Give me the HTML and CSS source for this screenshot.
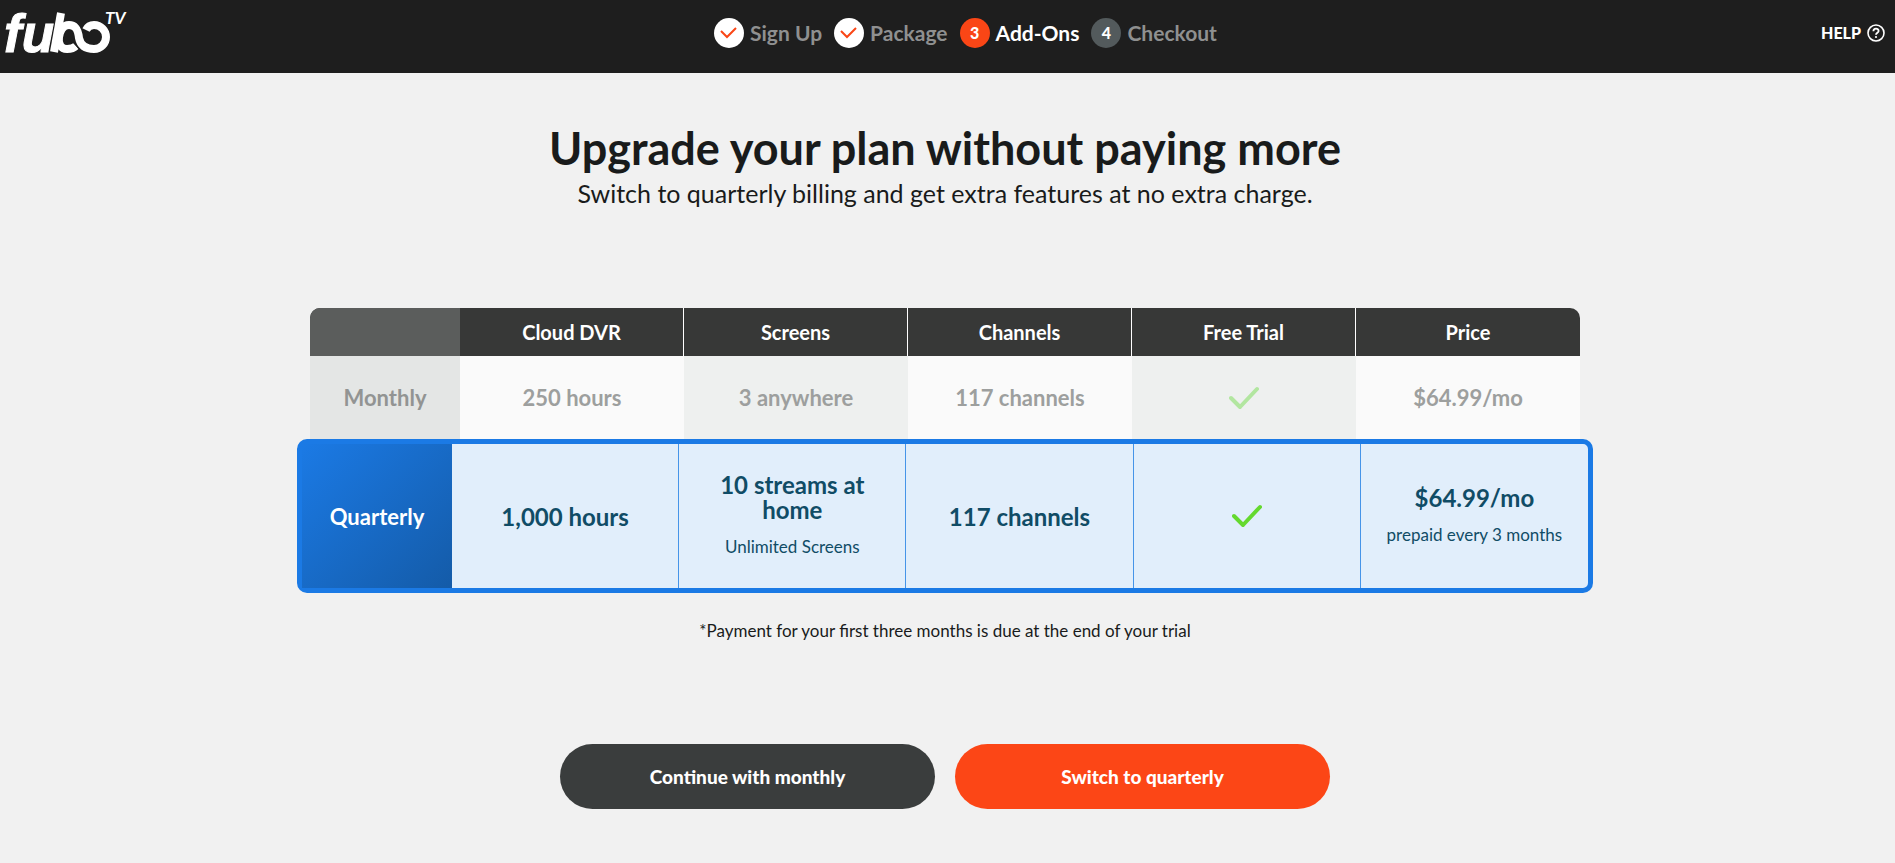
FILE: index.html
```html
<!DOCTYPE html>
<html lang="en">
<head>
<meta charset="utf-8">
<meta name="viewport" content="width=device-width, initial-scale=1">
<title>fuboTV - Add-Ons</title>
<link rel="stylesheet" href="styles.css">
</head>
<body>
<header class="topbar">
  <a class="logo" href="#" aria-label="fuboTV home">
    <svg width="130" height="70" viewBox="0 0 130 70" aria-hidden="true">
      <text class="logo-word" x="0" y="52">fu</text>
      <g fill="none" stroke="#fff" stroke-width="8">
        <path d="M57 13L50 52"/>
        <path d="M82 30C84 26 87 25 90 25A12 12 0 0 1 90 49C79 49 76 43 75 38C74 29 71 25 65 25C59 25 56 31 55 37C54 44 57 49 63 49C67 49 70 48 72 46"/>
      </g>
      <path d="M71 44Q74 48 77 52" fill="none" stroke="#1e1e1e" stroke-width="1"/>
      <text class="logo-tv" x="101" y="24">TV</text>
    </svg>
  </a>
  <ol class="steps">
    <li class="step">
      <span class="badge badge-done"><svg width="30" height="30" viewBox="0 0 30 30" aria-hidden="true"><path d="M7 13L13 19L22 10"/></svg></span>
      <span>Sign Up</span>
    </li>
    <li class="step">
      <span class="badge badge-done"><svg width="30" height="30" viewBox="0 0 30 30" aria-hidden="true"><path d="M7 13L13 19L22 10"/></svg></span>
      <span>Package</span>
    </li>
    <li class="step step-current" aria-current="step">
      <span class="badge badge-current">3</span>
      <span>Add-Ons</span>
    </li>
    <li class="step">
      <span class="badge">4</span>
      <span>Checkout</span>
    </li>
  </ol>
  <a class="help" href="#">HELP
    <svg width="18" height="18" viewBox="0 0 18 18" fill="none" stroke="#fff" aria-hidden="true">
      <circle cx="9" cy="9" r="8" stroke-width="1.6"/>
      <path d="M6.4 7.2C6.4 3.8 11.6 3.8 11.6 7C11.6 8.8 9 8.7 9 10.8" stroke-width="1.8"/>
      <circle cx="9" cy="13" r="1.1" fill="#fff" stroke="none"/>
    </svg>
  </a>
</header>

<main class="content">
  <h1 class="title">Upgrade your plan without paying more</h1>
  <p class="subtitle">Switch to quarterly billing and get extra features at no extra charge.</p>

  <table class="plans">
    <thead>
      <tr class="row row-head">
        <td class="cell corner"></td>
        <th class="cell" scope="col">Cloud DVR</th>
        <th class="cell" scope="col">Screens</th>
        <th class="cell" scope="col">Channels</th>
        <th class="cell" scope="col">Free Trial</th>
        <th class="cell" scope="col">Price</th>
      </tr>
    </thead>
    <tbody>
      <tr class="row row-monthly">
        <th class="cell" scope="row">Monthly</th>
        <td class="cell">250 hours</td>
        <td class="cell">3 anywhere</td>
        <td class="cell">117 channels</td>
        <td class="cell"><svg class="tick" width="30" height="24" viewBox="0 0 30 24" role="img" aria-label="Included"><path d="M2 12L11 21L28 3"/></svg></td>
        <td class="cell">$64.99/mo</td>
      </tr>
      <tr class="row row-quarterly">
        <th class="cell" scope="row">Quarterly</th>
        <td class="cell">1,000 hours</td>
        <td class="cell">10 streams at home<span class="detail">Unlimited Screens</span></td>
        <td class="cell">117 channels</td>
        <td class="cell"><svg class="tick" width="30" height="24" viewBox="0 0 30 24" role="img" aria-label="Included"><path d="M2 12L11 21L28 3"/></svg></td>
        <td class="cell">$64.99/mo<span class="detail">prepaid every 3 months</span></td>
      </tr>
    </tbody>
  </table>

  <p class="note">*Payment for your first three months is due at the end of your trial</p>

  <div class="actions">
    <button class="button button-dark" type="button">Continue with monthly</button>
    <button class="button button-accent" type="button">Switch to quarterly</button>
  </div>
</main>
</body>
</html>
```

FILE: styles.css
```css
* {
  box-sizing: border-box;
}

body {
  margin: 0;
  background: #f1f1f1;
  color: #191b1b;
  font-family: Lato, "Open Sans", sans-serif;
}

.topbar {
  display: grid;
  grid-template-columns: 1fr auto 1fr;
  align-items: start;
  height: 73px;
  padding: 0 10px 0 4px;
  background: #1e1e1e;
}

.logo {
  justify-self: start;
}

.logo svg {
  display: block;
}

.logo-word {
  fill: #fff;
  stroke: #fff;
  stroke-width: 1;
  font-family: "Liberation Sans", Arial, sans-serif;
  font-size: 53px;
  font-style: italic;
  font-weight: 700;
}

.logo-tv {
  fill: #fff;
  font-size: 17px;
  font-style: italic;
  font-weight: 700;
}

.steps {
  display: flex;
  gap: 12px;
  margin: 0;
  padding: 18px 0 0 42px;
  list-style: none;
}

.step {
  display: flex;
  align-items: center;
  gap: 6px;
  color: #8f9090;
  font-size: 21px;
  line-height: 30px;
  font-weight: 700;
}

.step-current {
  color: #fff;
}

.badge {
  display: grid;
  place-items: center;
  width: 30px;
  height: 30px;
  border-radius: 50%;
  background: #535a5c;
  color: #fff;
  font-size: 16px;
  font-weight: 900;
}

.badge-done {
  background: #fff;
}

.badge-done path {
  fill: none;
  stroke: #fa4616;
  stroke-width: 2;
}

.badge-current {
  background: #fa4616;
}

.help {
  display: flex;
  align-items: center;
  justify-self: end;
  gap: 6px;
  padding-top: 18px;
  color: #fff;
  font-size: 16px;
  line-height: 30px;
  font-weight: 900;
  text-decoration: none;
}

.content {
  padding: 48px 5px 54px 0;
  text-align: center;
}

.title {
  margin: 0;
  font-size: 45px;
  line-height: 54px;
  font-weight: 700;
}

.subtitle {
  margin: 0;
  font-size: 25px;
  line-height: 36px;
}

.plans {
  display: block;
  max-width: 1270px;
  margin: 97px auto 0;
}

.plans thead,
.plans tbody {
  display: block;
}

.row {
  display: grid;
  grid-template-columns: 150px repeat(5, 1fr);
}

.cell {
  display: flex;
  flex-direction: column;
  align-items: center;
  justify-content: center;
  padding: 0 20px;
  font-weight: 700;
}

.row-head {
  min-height: 48px;
  border-radius: 10px 10px 0 0;
  background: #373837;
  color: #fff;
  font-size: 20px;
  overflow: hidden;
}

.row-head .cell + .cell:not(:last-child) {
  border-right: 1px solid #fff;
}

.corner {
  background: #5b5d5c;
}

.row-monthly {
  min-height: 83px;
  color: #9d9f9e;
  font-size: 22px;
}

.row-monthly .cell {
  background: #fafafa;
}

.row-monthly .cell:nth-child(odd) {
  background: #eef0ef;
}

.row-monthly .cell:first-child {
  background: #e4e6e5;
  color: #929493;
}

.row-quarterly {
  min-height: 154px;
  margin: 0 -13px;
  border: 5px solid #1b7ae5;
  border-radius: 10px;
  background: #e1eefb;
  color: #104c66;
  font-size: 24px;
  line-height: 25px;
}

.row-quarterly .cell:not(:last-child) {
  border-right: 1px solid #4594e8;
}

.row-quarterly .cell:first-child {
  border-right: 0;
  background: linear-gradient(135deg, #1b7ae5, #145ba8);
  color: #fff;
  font-size: 22px;
}

.detail {
  margin-top: 12px;
  font-size: 17px;
  line-height: 26px;
  font-weight: 400;
  white-space: nowrap;
}

.tick path {
  fill: none;
  stroke: #64d92e;
  stroke-width: 4;
  stroke-linecap: round;
  stroke-linejoin: round;
}

.row-monthly .tick path {
  stroke: #b2e6a0;
}

.note {
  margin: 26px 0 0;
  font-size: 17px;
  line-height: 24px;
}

.actions {
  display: flex;
  justify-content: center;
  gap: 20px;
  margin-top: 101px;
}

.button {
  width: 375px;
  height: 65px;
  border: 0;
  border-radius: 33px;
  color: #fff;
  font-family: inherit;
  font-size: 19px;
  font-weight: 900;
  cursor: pointer;
}

.button-dark {
  background: #3a3d3d;
}

.button-accent {
  background: #fc4616;
}
```
